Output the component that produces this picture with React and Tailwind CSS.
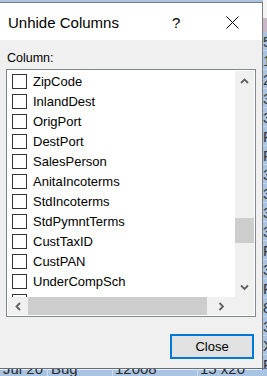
import React from 'react';

const columns = [
    'ZipCode',
    'InlandDest',
    'OrigPort',
    'DestPort',
    'SalesPerson',
    'AnitaIncoterms',
    'StdIncoterms',
    'StdPymntTerms',
    'CustTaxID',
    'CustPAN',
    'UnderCompSch',
    'CustGroup',
];

const sideChars = ['5', '1', '2', '3', '3', 'F', 'F', '3', '3', '3', '3', 'F', '3', 'F', '8', '3', 'X', 'F'];

function Chevron({ dir }) {
    const pts = {
        up: '1,5 4.5,1.5 8,5',
        down: '1,1.5 4.5,5 8,1.5',
        left: '5,1 1.5,4.5 5,8',
        right: '1.5,1 5,4.5 1.5,8',
    }[dir];
    const horiz = dir === 'left' || dir === 'right';
    return (
        <svg width={horiz ? 7 : 9} height={horiz ? 9 : 7} viewBox={horiz ? '0 0 7 9' : '0 0 9 7'}>
            <polyline points={pts} fill="none" stroke="#606060" strokeWidth="1.8" />
        </svg>
    );
}

export default function App() {
    return (
        <div
            className="w-[267px] h-[376px] bg-[#a9c3e2] flex flex-col overflow-hidden text-black"
            style={{ fontFamily: '"Liberation Sans", Arial, sans-serif' }}
        >
            <div className="flex h-[368px]">
                {/* Dialog */}
                <div className="w-[263px] h-full flex flex-col bg-[#f0f0f0] border-t border-r border-[#7c7c7c] mt-[2px]">
                    {/* Title bar */}
                    <div className="h-[37px] bg-white flex items-center pl-[8px] shrink-0">
                        <span className="text-[15px] leading-none flex-1 mt-[2px]">Unhide Columns</span>
                        <span className="text-[15px] leading-none w-[8px] mr-[46px] mt-[2px]">?</span>
                        <svg width="13" height="13" viewBox="0 0 13 13" className="mr-[23px] mt-[1px]">
                            <path d="M0.5 0.5 L12.5 12.5 M12.5 0.5 L0.5 12.5" stroke="#000" strokeWidth="1" />
                        </svg>
                    </div>

                    {/* Body */}
                    <div className="flex-1 flex flex-col px-[6px]">
                        <div className="text-[12.5px] leading-none pt-[12px] pl-[1px] h-[29px]">Column:</div>

                        <div className="w-[250px] h-[248px] border border-[#828790] bg-white p-[1px] grid grid-cols-[1fr_19px] grid-rows-[1fr_18px]">
                            <div className="overflow-hidden">
                                {columns.map((c) => (
                                    <div key={c} className="h-[20px] flex items-center">
                                        <div className="w-[15px] h-[15px] border border-[#333] bg-white ml-[4px] shrink-0" />
                                        <span className="text-[13px] leading-none ml-[6px] whitespace-nowrap">{c}</span>
                                    </div>
                                ))}
                            </div>

                            {/* Vertical scrollbar */}
                            <div className="bg-[#f0f0f0] flex flex-col items-center">
                                <div className="h-[20px] flex items-center justify-center">
                                    <Chevron dir="up" />
                                </div>
                                <div className="flex-1 w-full flex flex-col justify-end pb-[34px]">
                                    <div className="h-[25px] w-full bg-[#cdcdcd]" />
                                </div>
                                <div className="h-[20px] flex items-center justify-center">
                                    <Chevron dir="down" />
                                </div>
                            </div>

                            {/* Horizontal scrollbar */}
                            <div className="bg-[#f0f0f0] flex items-center">
                                <div className="w-[20px] flex justify-center">
                                    <Chevron dir="left" />
                                </div>
                                <div className="w-[179px] h-full bg-[#cdcdcd]" />
                                <div className="flex-1 flex justify-center">
                                    <Chevron dir="right" />
                                </div>
                            </div>
                            <div className="bg-[#f0f0f0]" />
                        </div>

                        <div className="flex justify-end pr-[2px] mt-[17px]">
                            <button className="w-[84px] h-[25px] border-2 border-[#0078d7] bg-[#e1e1e1] text-[13px] leading-none">
                                Close
                            </button>
                        </div>
                    </div>
                </div>

                {/* Spreadsheet behind, right edge */}
                <div className="flex-1 flex flex-col overflow-hidden">
                    <div className="h-[18px] bg-[#f4f4f4] shrink-0" />
                    <div className="h-[14px] bg-[#c9b9c6] shrink-0" />
                    {sideChars.map((ch, i) => (
                        <div key={i} className="h-[19px] shrink-0 text-[15px] leading-[19px] text-[#333] border-b border-[#c5d6ea] whitespace-nowrap">
                            {ch}
                        </div>
                    ))}
                </div>
            </div>

            {/* Spreadsheet behind, bottom edge */}
            <div className="h-[8px] overflow-hidden border-t border-[#5d6f85]">
                <div className="flex text-[15px] leading-[15px] text-[#2a2a2a] -mt-[8px] whitespace-nowrap">
                    <span className="w-[48px] pl-[3px] border-r border-[#d0dcea]">Jul 20</span>
                    <span className="w-[65px] pl-[3px] border-r border-[#d0dcea]">Bug</span>
                    <span className="w-[85px] pl-[2px] border-r border-[#d0dcea]">12008</span>
                    <span className="w-[69px] pl-[2px]">15 x20</span>
                </div>
            </div>
        </div>
    );
}
